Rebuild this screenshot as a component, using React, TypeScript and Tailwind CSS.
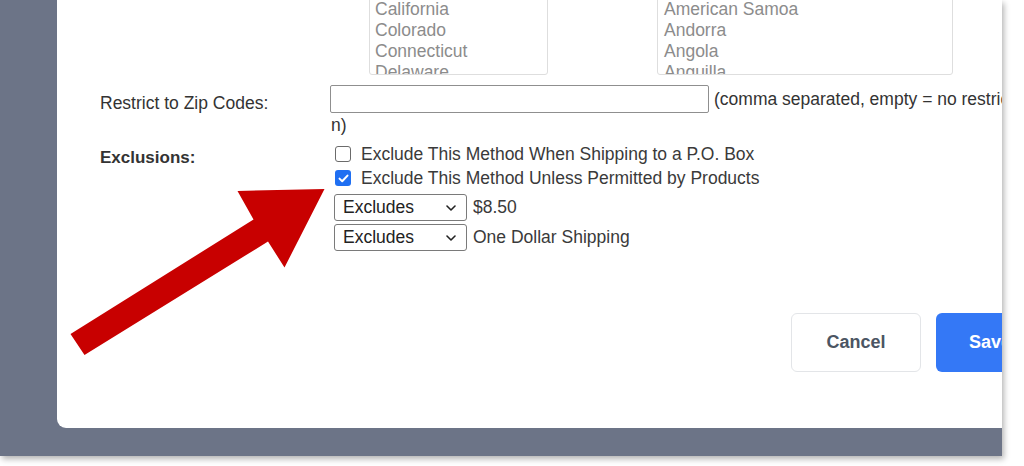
import React from "react";

const states = ["California", "Colorado", "Connecticut", "Delaware"];
const countries = ["American Samoa", "Andorra", "Angola", "Anguilla"];

function ListBox({ items, className }: { items: string[]; className: string }) {
  return (
    <div
      className={`h-[87px] overflow-hidden rounded-[3px] border border-[#dedede] bg-white pl-[5px] pt-[10px] ${className}`}
    >
      {items.map((item) => (
        <div key={item} className="text-[17.5px] leading-[21px] text-[#8c8c8c]">
          {item}
        </div>
      ))}
    </div>
  );
}

function Checkbox({ checked, label }: { checked?: boolean; label: string }) {
  return (
    <div className="flex h-[24px] items-center pl-[5px]">
      {checked ? (
        <span className="flex h-[16px] w-[16px] items-center justify-center rounded-[3px] bg-[#1f6ff2]">
          <svg width="11" height="9" viewBox="0 0 11 9" fill="none">
            <path
              d="M1.5 4.6 L4.2 7.2 L9.5 1.6"
              stroke="white"
              strokeWidth="2"
              strokeLinecap="round"
              strokeLinejoin="round"
            />
          </svg>
        </span>
      ) : (
        <span className="h-[16px] w-[16px] rounded-[3px] border border-[#6b6b6b] bg-white" />
      )}
      <span className="ml-[10px] text-[17.5px] text-[#3a3a3a]">{label}</span>
    </div>
  );
}

function SelectRow({ label }: { label: string }) {
  return (
    <div className="flex items-center pl-[4px]">
      <div className="flex h-[27px] w-[133px] items-center justify-between rounded-[3px] border border-[#7a7a7a] bg-white pl-[8px] pr-[10px]">
        <span className="text-[17.5px] text-[#222]">Excludes</span>
        <svg width="10" height="6" viewBox="0 0 10 6" fill="none">
          <path
            d="M1 1 L5 5 L9 1"
            stroke="#222"
            strokeWidth="1.6"
            strokeLinecap="round"
            strokeLinejoin="round"
          />
        </svg>
      </div>
      <span className="ml-[6px] text-[17.5px] text-[#3a3a3a]">{label}</span>
    </div>
  );
}

export default function App() {
  return (
    <div
      className="h-[466px] w-[1024px] bg-white"
      style={{ fontFamily: '"Liberation Sans", Arial, sans-serif' }}
    >
      <div className="relative h-[456px] w-[1002px] overflow-hidden bg-[#6c7487] shadow-[2px_3px_6px_rgba(0,0,0,0.3)]">
        <div className="ml-[57px] h-[428px] overflow-hidden rounded-bl-[9px] bg-white pl-[43px]">
          {/* location lists */}
          <div className="-mt-[12px] flex">
            <ListBox items={states} className="ml-[269px] w-[179px]" />
            <ListBox items={countries} className="ml-[109px] w-[296px] pl-[6px]" />
          </div>

          {/* zip codes */}
          <div className="mt-[10px] grid grid-cols-[230px_1fr]">
            <div className="pt-[8px] text-[17.5px] leading-[20px] text-[#333]">
              Restrict to Zip Codes:
            </div>
            <div>
              <div className="flex items-center">
                <div className="h-[28px] w-[379px] shrink-0 rounded-[2px] border border-[#8f8f8f] bg-white" />
                <span className="ml-[5px] whitespace-nowrap text-[17.5px] text-[#333]">
                  (comma separated, empty = no restrictio
                </span>
              </div>
              <div className="mt-[2px] pl-[1px] text-[17.5px] leading-[20px] text-[#333]">n)</div>
            </div>
          </div>

          {/* exclusions */}
          <div className="mt-[7px] grid grid-cols-[230px_1fr]">
            <div className="pt-[6px] text-[17px] font-bold leading-[20px] text-[#333]">
              Exclusions:
            </div>
            <div>
              <Checkbox label="Exclude This Method When Shipping to a P.O. Box" />
              <Checkbox checked label="Exclude This Method Unless Permitted by Products" />
              <div className="mt-[4px] flex flex-col gap-[3px]">
                <SelectRow label="$8.50" />
                <SelectRow label="One Dollar Shipping" />
              </div>
            </div>
          </div>

          {/* actions */}
          <div className="mt-[62px] flex gap-[15px] pl-[691px]">
            <button className="h-[59px] w-[130px] shrink-0 rounded-[6px] border border-[#e3e5e8] bg-white text-[18px] font-bold text-[#4b5563]">
              Cancel
            </button>
            <button className="h-[59px] w-[120px] shrink-0 rounded-[6px] bg-[#3478f6] pl-[33px] text-left text-[18px] font-bold text-white">
              Save
            </button>
          </div>
        </div>

        {/* annotation arrow */}
        <svg
          className="pointer-events-none absolute left-0 top-0"
          width="1002"
          height="456"
          viewBox="0 0 1002 456"
        >
          <polygon
            points="70.5,334 253.5,219.5 237.5,191 324.5,189 284.5,267.5 268,241.5 84.5,355"
            fill="#c80000"
          />
        </svg>
      </div>
    </div>
  );
}
